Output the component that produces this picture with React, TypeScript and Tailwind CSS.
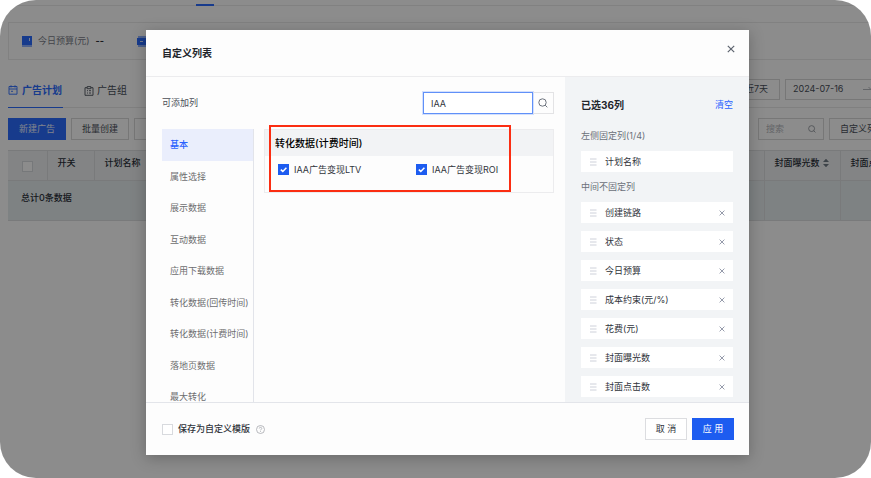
import React, { useState } from 'react';

const categories = [
    '基本',
    '属性选择',
    '展示数据',
    '互动数据',
    '应用下载数据',
    '转化数据(回传时间)',
    '转化数据(计费时间)',
    '落地页数据',
    '最大转化',
];

const metrics = ['IAA广告变现LTV', 'IAA广告变现ROI'];

const initialColumns = [
    '创建链路',
    '状态',
    '今日预算',
    '成本约束(元/%)',
    '花费(元)',
    '封面曝光数',
    '封面点击数',
];

const SearchIcon = ({ className }: { className: string }) => (
    <svg className={className} viewBox="0 0 20 20" fill="none" stroke="currentColor" strokeWidth="1.8">
        <circle cx="9" cy="9" r="7.4" />
        <path d="M14.4 14.4L18.6 18.6" />
    </svg>
);

const CloseIcon = ({ className }: { className: string }) => (
    <svg className={className} viewBox="0 0 10 10" fill="none" stroke="currentColor" strokeWidth="1.5">
        <path d="M1 1L9 9M9 1L1 9" />
    </svg>
);

const HandleIcon = () => (
    <svg className="w-2 h-2 shrink-0 text-[#c8ccd6]" viewBox="0 0 8 8" fill="none" stroke="currentColor" strokeWidth="0.9">
        <path d="M1 1H7.5M1 4H7.5M1 7H7.5" />
    </svg>
);

const SortIcon = () => (
    <svg className="w-[6px] h-[10px] shrink-0 text-[#6f7a84]" viewBox="0 0 6 10" fill="currentColor">
        <path d="M3 0.8L6 4H0zM3 9.2L6 6H0z" />
    </svg>
);

interface CheckboxProps {
    id: string;
    label?: string;
    ariaLabel?: string;
    defaultChecked?: boolean;
    labelClass?: string;
}

const Checkbox: React.FC<CheckboxProps> = ({ id, label, ariaLabel, defaultChecked, labelClass }) => (
    <div className="flex items-center gap-[5px]">
        <span className="grid w-[11px] h-[11px] shrink-0">
            <input
                id={id}
                type="checkbox"
                aria-label={ariaLabel}
                defaultChecked={defaultChecked}
                className="peer appearance-none col-start-1 row-start-1 w-[11px] h-[11px] border border-[#d8dade] bg-white checked:bg-[#1d5cf0] checked:border-[#1d5cf0]"
            />
            <svg
                className="pointer-events-none invisible peer-checked:visible z-10 col-start-1 row-start-1 w-[11px] h-[11px]"
                viewBox="0 0 11 11"
                fill="none"
                stroke="white"
                strokeWidth="1.5"
            >
                <path d="M2.8 5.6L4.8 7.4L8.4 3.7" />
            </svg>
        </span>
        {label && <label htmlFor={id} className={labelClass}>{label}</label>}
    </div>
);

const PlanPage = () => (
    <div className="min-h-screen bg-white text-[9px] text-[#4a505a]">
        <div className="flex h-[6px] border-b border-[#ececec] pl-[196px]">
            <span className="w-[18px] h-[6px] border-b-2 border-[#2b6cff]" />
        </div>

        <div className="mt-4 ml-2 flex h-[38px] items-center border border-r-0 border-[#ececec] pl-[13px]">
            <svg className="w-[10px] h-[11px]" viewBox="0 0 10 11">
                <path d="M0 0H10V9H0Z" fill="#2b6cff" />
                <path d="M0 9H10V11H0Z" fill="#8fb1ff" />
                <path d="M7.5 2V5" stroke="#dbe6ff" />
            </svg>
            <span className="ml-[6px] text-[#7b8089]">今日预算(元)</span>
            <span className="ml-[6px] font-bold text-[#2a2f38]">--</span>
            <svg className="ml-[33px] w-[14px] h-[11px]" viewBox="0 0 14 11">
                <path d="M1 0H14V11H1Z" fill="#8fb1ff" />
                <path d="M0 2H14V9H0Z" fill="#2b6cff" />
                <path d="M3 5.5H6" stroke="#dbe6ff" />
            </svg>
        </div>

        <div className="mt-[11px] ml-2 flex h-[37px] items-center border-b border-[#e9e9e9] text-[10px]">
            <a href="#plan" className="flex h-[37px] items-center gap-1 border-b border-[#2b6cff] pt-[3px] pr-px font-bold text-[#2b6cff]">
                <svg className="w-[10px] h-[10px]" viewBox="0 0 10 10" fill="none" stroke="currentColor" strokeWidth="0.9">
                    <path d="M1 1.5H9V9.2H1ZM1 4H9M3 0.3V2.5M7 0.3V2.5M3 6.3H5" />
                </svg>
                广告计划
            </a>
            <a href="#group" className="ml-[21px] flex items-center gap-[3px] pt-[3px]">
                <svg className="w-[10px] h-[10px]" viewBox="0 0 10 10" fill="none" stroke="currentColor" strokeWidth="0.9">
                    <path d="M3 1.7H1V9.3H9V1.7H7M3.2 0.6H6.8V2.7H3.2ZM3 4.7H4M5 4.7H7M3 7H4M5 7H7" />
                </svg>
                广告组
            </a>
            <div className="ml-auto flex text-[9px]">
                <button className="h-[21px] border border-[#d9d9d9] px-[11px]">近7天</button>
                <button className="ml-[5px] flex h-[21px] w-[86px] items-center justify-between border border-r-0 border-[#d9d9d9] pl-[7px]">
                    2024-07-16
                    <svg className="w-2 h-2 text-[#b5b8bd]" viewBox="0 0 8 8" fill="none" stroke="currentColor">
                        <path d="M0 4.5H8M5.5 2L8 4.5" />
                    </svg>
                </button>
            </div>
        </div>

        <div className="mt-[10px] ml-2 flex gap-[5px]">
            <button className="h-[22px] w-[58px] bg-[#2b6cff] text-[#e9efff]">新建广告</button>
            <button className="h-[22px] w-[58px] border border-[#d9d9d9]">批量创建</button>
            <button className="h-[22px] w-[58px] border border-[#d9d9d9]">下载</button>
            <div className="ml-auto flex h-[22px] w-[66px] items-center border border-[#d9d9d9] px-[7px]">
                <input aria-label="搜索" placeholder="搜索" className="w-full min-w-0 placeholder:text-[#b4b7bc]" />
                <SearchIcon className="w-2 h-2 shrink-0 text-[#7b8089]" />
            </div>
            <button className="h-[22px] w-[42px] overflow-hidden border border-r-0 border-[#d9d9d9] pl-[10px] text-left whitespace-nowrap">
                自定义列
            </button>
        </div>

        <div className="mt-[10px] ml-2">
            <table className="w-full table-fixed border-collapse text-left whitespace-nowrap text-[#2a2f38]">
                <colgroup>
                    <col className="w-[39px]" />
                    <col className="w-[47px]" />
                    <col />
                    <col className="w-[76px]" />
                    <col className="w-[31px]" />
                </colgroup>
                <thead>
                    <tr className="h-[30px] border-y border-[#dcdfe1] bg-[#eef1f3]">
                        <th className="border-r border-[#dcdfe1] pt-px pl-[14px]">
                            <Checkbox id="all" ariaLabel="全选" />
                        </th>
                        <th className="border-r border-[#dcdfe1] pb-1.5 pl-[10px] font-medium">开关</th>
                        <th className="border-r border-[#dcdfe1] pb-1.5 pl-[10px] font-medium">计划名称</th>
                        <th className="border-r border-[#dcdfe1] pb-1.5 pl-[10px] font-medium">
                            <span className="flex items-center gap-[3px]">封面曝光数<SortIcon /></span>
                        </th>
                        <th className="overflow-hidden pb-1.5 pl-[10px] font-medium">封面点击数</th>
                    </tr>
                </thead>
                <tbody>
                    <tr className="h-[40px] border-b border-[#dcdfe1] bg-[#e6edef]">
                        <td colSpan={3} className="border-r border-[#dcdfe1] pb-1.5 pl-[13px] font-medium">总计0条数据</td>
                        <td className="border-r border-[#dcdfe1]" />
                        <td />
                    </tr>
                </tbody>
            </table>
        </div>
    </div>
);

const ColumnModal = () => {
    const [search, setSearch] = useState('IAA');
    const [active, setActive] = useState(categories[0]);
    const [columns, setColumns] = useState(initialColumns);

    return (
        <div role="dialog" aria-label="自定义列表" className="flex flex-1 min-w-0 flex-col bg-[#fdfdfd] text-[9px] text-[#30343b] shadow-[0_3px_14px_rgba(0,0,0,0.25)]">
            <div className="flex h-[47px] shrink-0 items-center justify-between border-b border-[#ececee] pr-[14px] pl-4">
                <h2 className="text-[10px] font-bold text-[#22252b]">自定义列表</h2>
                <button aria-label="关闭" className="-mt-[9px] text-[#5d646f]">
                    <CloseIcon className="w-2 h-2" />
                </button>
            </div>

            <div className="flex flex-1 min-h-0">
                <div className="flex flex-1 min-w-0 flex-col overflow-hidden pt-[15px] pr-[11px] pl-4">
                    <div className="flex shrink-0 items-center">
                        <label htmlFor="search" className="text-[#4a4e56]">可添加列</label>
                        <input
                            id="search"
                            value={search}
                            onChange={(e) => setSearch(e.target.value)}
                            className="ml-auto h-[22px] w-[110px] border border-[#6090f8] bg-white px-[7px] shadow-[0_0_0_1px_#d3e0fd] outline-none"
                        />
                        <button aria-label="搜索列" className="flex h-[22px] w-[21px] items-center justify-center border border-l-0 border-[#e3e3e5] text-[#5d646f]">
                            <SearchIcon className="w-[10px] h-[10px] shrink-0" />
                        </button>
                    </div>

                    <div className="mt-[15px] flex flex-1 min-h-0 gap-[10px]">
                        <div className="w-[92px] shrink-0 overflow-hidden border-r border-[#e2e4ea]">
                            {categories.map((item) => (
                                <button
                                    key={item}
                                    onClick={() => setActive(item)}
                                    className={
                                        'block h-[31px] odd:h-8 w-full pl-2 text-left whitespace-nowrap ' +
                                        (item === active ? 'bg-[#eaeefc] font-medium text-[#2a62ff]' : 'text-[#6e6e70]')
                                    }
                                >
                                    {item}
                                </button>
                            ))}
                        </div>

                        <div className="relative flex-1 min-w-0 self-start border border-[#ececee]">
                            <h3 className="flex h-[26px] items-center bg-[#f2f3f5] pl-[10px] text-[10px] font-medium text-black">
                                转化数据(计费时间)
                            </h3>
                            <div className="flex h-[36px] gap-[54px] pt-[7px] pl-[13px]">
                                {metrics.map((item) => (
                                    <div key={item} className="flex w-[84px] items-start whitespace-nowrap">
                                        <Checkbox id={item} label={item} defaultChecked />
                                    </div>
                                ))}
                            </div>
                            <div className="pointer-events-none absolute -top-[5px] bottom-0 left-[4px] right-[42px] border-2 border-[#fb2d12]" />
                        </div>
                    </div>
                </div>

                <div className="w-[184px] shrink-0 overflow-hidden bg-[#f2f4f6] px-4 pt-5">
                    <div className="flex h-4 items-center justify-between">
                        <h3 className="text-[10px] font-bold text-[#22252b]">已选36列</h3>
                        <button onClick={() => setColumns([])} className="text-[#2a62ff]">清空</button>
                    </div>
                    <h4 className="mt-[15px] h-4 leading-4 text-[#6b7079]">左侧固定列(1/4)</h4>
                    <div className="mt-[7px] flex h-[21px] items-center gap-2 bg-white px-2">
                        <HandleIcon />
                        计划名称
                    </div>
                    <h4 className="mt-[7px] h-4 leading-4 text-[#6b7079]">中间不固定列</h4>
                    <ul className="mt-[7px] space-y-2">
                        {columns.map((item) => (
                            <li key={item} className="flex h-[21px] items-center gap-2 bg-white px-2">
                                <HandleIcon />
                                {item}
                                <button
                                    aria-label={'移除' + item}
                                    onClick={() => setColumns(columns.filter((c) => c !== item))}
                                    className="ml-auto text-[#8a90a2]"
                                >
                                    <CloseIcon className="w-[6px] h-[6px]" />
                                </button>
                            </li>
                        ))}
                    </ul>
                </div>
            </div>

            <div className="flex h-[53px] shrink-0 items-center border-t border-[#e3e5ea] pr-[15px] pl-4">
                <Checkbox id="template" label="保存为自定义模版" labelClass="font-medium" />
                <svg className="ml-[6px] w-[9px] h-[9px] text-[#a0a3a9]" viewBox="0 0 18 18" fill="none" stroke="currentColor" strokeWidth="1.5">
                    <circle cx="9" cy="9" r="8" />
                    <path d="M6.5 7C6.5 3.8 11.5 3.8 11.5 7C11.5 8.7 9 8.8 9 10.8M9 12.4V14" />
                </svg>
                <button className="ml-auto h-[22px] w-[42px] border border-[#dcdde0] bg-white">取 消</button>
                <button className="ml-[5px] h-[22px] w-[42px] bg-[#1d5cf0] text-white">应 用</button>
            </div>
        </div>
    );
};

const App: React.FC = () => {
    return (
        <div className="bg-white">
            <div className="relative min-h-screen overflow-hidden rounded-[36px] font-['Inter','Noto_Sans_CJK_SC',sans-serif]">
                <PlanPage />
                <div className="absolute inset-0 z-20 flex bg-black/45 pt-[30px] pr-[122px] pb-[23px] pl-[146px]">
                    <ColumnModal />
                </div>
            </div>
        </div>
    );
};

export default App;
